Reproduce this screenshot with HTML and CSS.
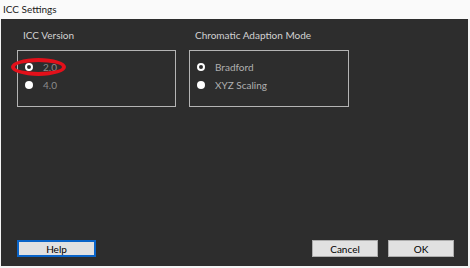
FILE: index.html
```html
<!DOCTYPE html>
<html lang="en">
<head>
    <meta charset="UTF-8">
    <title>ICC Settings</title>
    <link rel="stylesheet" href="styles.css">
</head>
<body>
    <div class="titlebar">ICC Settings</div>
    <div class="dialog">
        <div class="groups">
            <div class="group group-version">
                <div class="group-title">ICC Version</div>
                <div class="group-box">
                    <div class="option">
                        <span class="radio checked"></span>
                        <span class="option-text dim">2.0</span>
                        <span class="highlight"></span>
                    </div>
                    <div class="option">
                        <span class="radio"></span>
                        <span class="option-text dim">4.0</span>
                    </div>
                </div>
            </div>
            <div class="group group-mode">
                <div class="group-title">Chromatic Adaption Mode</div>
                <div class="group-box">
                    <div class="option">
                        <span class="radio checked"></span>
                        <span class="option-text">Bradford</span>
                    </div>
                    <div class="option">
                        <span class="radio"></span>
                        <span class="option-text">XYZ Scaling</span>
                    </div>
                </div>
            </div>
        </div>
        <div class="buttons">
            <button class="btn btn-help">Help</button>
            <div class="spacer"></div>
            <button class="btn btn-cancel">Cancel</button>
            <button class="btn btn-ok">OK</button>
        </div>
    </div>
</body>
</html>
```

FILE: styles.css
```css
html, body {
    margin: 0;
    padding: 0;
}
body {
    width: 470px;
    height: 268px;
    background-color: #f4f4f4;
    font-family: Lato, "Noto Sans", Arial, sans-serif;
    font-size: 10px;
    overflow: hidden;
}
.titlebar {
    height: 19px;
    line-height: 18px;
    padding-left: 3px;
    background: #fafafa;
    color: #1a1a1a;
    font-size: 10px;
}
.dialog {
    width: 467px;
    height: 247px;
    margin-left: 1px;
    background-color: #2d2d2d;
    display: flex;
    flex-direction: column;
    box-sizing: border-box;
    padding: 8px 14px 0 16px;
}
.groups {
    display: flex;
    gap: 13px;
    height: 80px;
}
.group-title {
    color: #d2d2d2;
    padding-left: 6px;
    height: 23px;
    line-height: 16px;
}
.group-box {
    position: relative;
    border: 1px solid #b4b4b4;
    box-sizing: border-box;
    height: 57px;
    padding: 7px 0 0 7px;
}
.group-version .group-box {
    width: 159px;
}
.group-mode .group-box {
    width: 160px;
}
.option {
    position: relative;
    display: flex;
    align-items: center;
    height: 18px;
}
.radio {
    width: 8px;
    height: 8px;
    border-radius: 50%;
    background: #ffffff;
    box-sizing: border-box;
    margin-right: 10px;
}
.radio.checked {
    background: transparent;
    border: 2px solid #ffffff;
}
.option-text {
    color: #b0b0b0;
}
.option-text.dim {
    color: #8c8c8c;
}
.highlight {
    position: absolute;
    left: -14px;
    top: 0;
    width: 55px;
    height: 18px;
    border: 4px solid #e3101a;
    border-radius: 50%;
    box-sizing: border-box;
}
.buttons {
    display: flex;
    gap: 10px;
    margin-top: 133px;
}
.spacer {
    flex: 1;
}
.btn {
    height: 17px;
    padding: 0;
    font-family: inherit;
    font-size: 10px;
    color: #000;
    background: #e1e1e1;
    border: 1px solid #adadad;
    box-sizing: border-box;
    line-height: 14px;
}
.btn-help {
    width: 79px;
    border: 2px solid #0a64c8;
}
.btn-cancel, .btn-ok {
    width: 66px;
}
```
